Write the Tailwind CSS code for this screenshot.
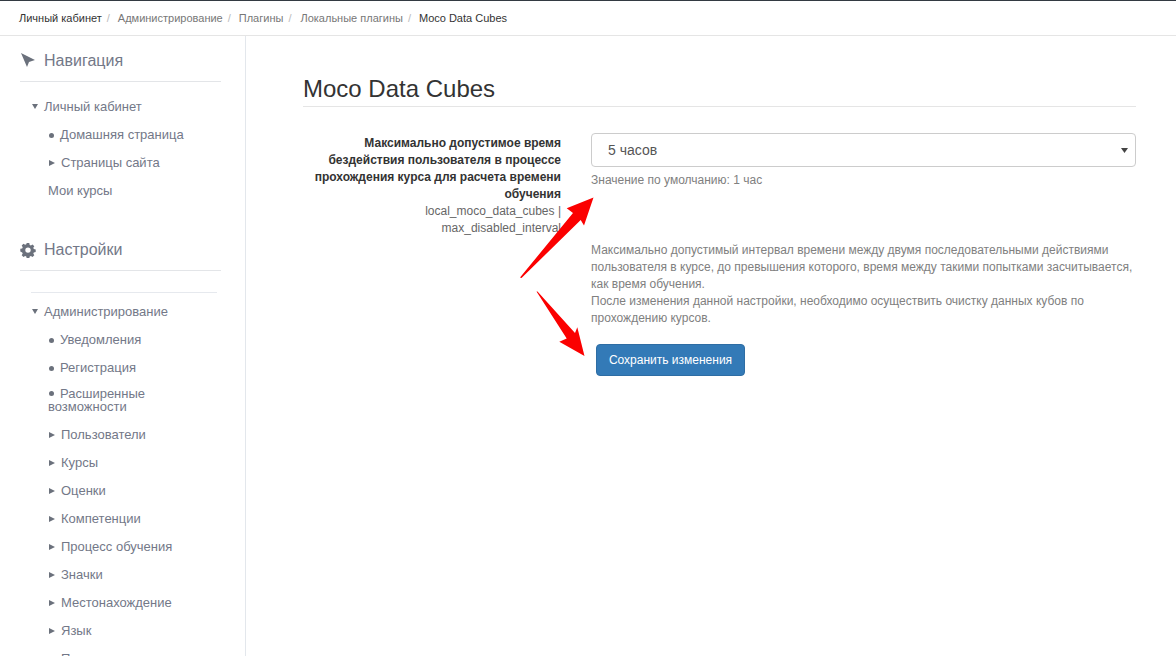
<!DOCTYPE html>
<html lang="ru">
<head>
<meta charset="utf-8">
<title>Moco Data Cubes</title>
<script src="https://cdn.jsdelivr.net/npm/@tailwindcss/browser@4"></script>
</head>
<body class="bg-white font-['Liberation_Sans',Arial,sans-serif] text-[#333]">
<div class="relative h-[656px] w-[1176px] overflow-hidden border-t border-t-[#333a42]">
  <nav class="flex h-[35px] items-center border-b border-[#e5e5e5] pl-[19px] text-[11px] text-[#777]">
    <span class="text-[#333]">Личный кабинет</span><span class="ml-[5px] mr-[8px] text-[#bbb]">/</span>
    <span>Администрирование</span><span class="ml-[5px] mr-[8px] text-[#bbb]">/</span>
    <span>Плагины</span><span class="ml-[5px] mr-[9px] text-[#bbb]">/</span>
    <span>Локальные плагины</span><span class="ml-[5px] mr-[8px] text-[#bbb]">/</span>
    <span class="text-[#333]">Moco Data Cubes</span>
  </nav>
  <div class="flex h-[620px]">
    <aside class="w-[246px] shrink-0 overflow-hidden border-r border-[#e3e7ec] pl-[20px] pr-[24px] text-[13px] text-[#737888]">
      <div class="flex h-[46px] items-center pt-[5px] text-[16px] text-[#737888] border-b border-[#e3e5e8]">
        <svg class="mr-[8px] h-[16px] w-[16px]" viewBox="0 0 16 16"><path d="M1 0 L15 7 L9 9 L7 14 Z" fill="#6b717c"/></svg>
        <span>Навигация</span>
      </div>
      <ul class="pt-[11px]">
        <li class="flex h-[28px] items-center pl-[12px]"><svg class="mb-[2px] mr-[6px] h-[5px] w-[6px]" viewBox="0 0 6 5"><path d="M0 0H6L3 5Z" fill="#6b717c"/></svg>Личный кабинет</li>
        <li class="flex h-[28px] items-center pl-[29px]"><span class="mr-[6px] h-[5px] w-[5px] rounded-full bg-[#6b717c]"></span>Домашняя страница</li>
        <li class="flex h-[28px] items-center pl-[29px]"><svg class="mb-[1px] mr-[6px] h-[6px] w-[6px]" viewBox="0 0 6 6"><path d="M0 0L6 3L0 6Z" fill="#6b717c"/></svg>Страницы сайта</li>
        <li class="flex h-[28px] items-center pl-[28px]">Мои курсы</li>
      </ul>
      <div class="mt-[20px] flex h-[46px] items-center pt-[5px] text-[16px] text-[#737888] border-b border-[#e3e5e8]">
        <svg class="mr-[8px] h-[16px] w-[16px]" viewBox="0 0 16 16"><path fill="#6b717c" fill-rule="evenodd" d="M6.7 1h2.6l.4 1.9 1.2.5 1.6-1 1.8 1.8-1 1.6.5 1.2 1.9.4v2.6l-1.9.4-.5 1.2 1 1.6-1.8 1.8-1.6-1-1.2.5-.4 1.9H6.7l-.4-1.9-1.2-.5-1.6 1-1.8-1.8 1-1.6-.5-1.2L.3 9.4V6.8l1.9-.4.5-1.2-1-1.6 1.8-1.8 1.6 1 1.2-.5ZM8 5.4a2.7 2.7 0 1 0 0 5.4 2.7 2.7 0 0 0 0-5.4Z"/></svg>
        <span>Настройки</span>
      </div>
      <div class="ml-[11px] mr-[4px] mt-[21px] border-t border-[#e6e9ee]"></div>
      <ul class="pt-[5px]">
        <li class="flex h-[28px] items-center pl-[12px]"><svg class="mb-[2px] mr-[6px] h-[5px] w-[6px]" viewBox="0 0 6 5"><path d="M0 0H6L3 5Z" fill="#6b717c"/></svg>Администрирование</li>
        <li class="flex h-[28px] items-center pl-[29px]"><span class="mr-[6px] h-[5px] w-[5px] rounded-full bg-[#6b717c]"></span>Уведомления</li>
        <li class="flex h-[28px] items-center pl-[29px]"><span class="mr-[6px] h-[5px] w-[5px] rounded-full bg-[#6b717c]"></span>Регистрация</li>
        <li class="h-[39px] pl-[28px] pt-[5px] leading-[13px]"><span class="mb-[2px] ml-[1px] mr-[6px] inline-block h-[5px] w-[5px] rounded-full bg-[#6b717c]"></span>Расширенные<br>возможности</li>
        <li class="flex h-[28px] items-center pl-[29px]"><svg class="mb-[1px] mr-[6px] h-[6px] w-[6px]" viewBox="0 0 6 6"><path d="M0 0L6 3L0 6Z" fill="#6b717c"/></svg>Пользователи</li>
        <li class="flex h-[28px] items-center pl-[29px]"><svg class="mb-[1px] mr-[6px] h-[6px] w-[6px]" viewBox="0 0 6 6"><path d="M0 0L6 3L0 6Z" fill="#6b717c"/></svg>Курсы</li>
        <li class="flex h-[28px] items-center pl-[29px]"><svg class="mb-[1px] mr-[6px] h-[6px] w-[6px]" viewBox="0 0 6 6"><path d="M0 0L6 3L0 6Z" fill="#6b717c"/></svg>Оценки</li>
        <li class="flex h-[28px] items-center pl-[29px]"><svg class="mb-[1px] mr-[6px] h-[6px] w-[6px]" viewBox="0 0 6 6"><path d="M0 0L6 3L0 6Z" fill="#6b717c"/></svg>Компетенции</li>
        <li class="flex h-[28px] items-center pl-[29px]"><svg class="mb-[1px] mr-[6px] h-[6px] w-[6px]" viewBox="0 0 6 6"><path d="M0 0L6 3L0 6Z" fill="#6b717c"/></svg>Процесс обучения</li>
        <li class="flex h-[28px] items-center pl-[29px]"><svg class="mb-[1px] mr-[6px] h-[6px] w-[6px]" viewBox="0 0 6 6"><path d="M0 0L6 3L0 6Z" fill="#6b717c"/></svg>Значки</li>
        <li class="flex h-[28px] items-center pl-[29px]"><svg class="mb-[1px] mr-[6px] h-[6px] w-[6px]" viewBox="0 0 6 6"><path d="M0 0L6 3L0 6Z" fill="#6b717c"/></svg>Местонахождение</li>
        <li class="flex h-[28px] items-center pl-[29px]"><svg class="mb-[1px] mr-[6px] h-[6px] w-[6px]" viewBox="0 0 6 6"><path d="M0 0L6 3L0 6Z" fill="#6b717c"/></svg>Язык</li>
        <li class="flex h-[28px] items-center pl-[29px]"><svg class="mb-[1px] mr-[6px] h-[6px] w-[6px]" viewBox="0 0 6 6"><path d="M0 0L6 3L0 6Z" fill="#6b717c"/></svg>Плагины</li>
      </ul>
    </aside>
    <main class="w-[890px] pl-[57px] pt-[36px]">
      <h2 class="h-[35px] border-b border-[#e5e5e5] text-[24px] leading-[34px] text-[#333]">Moco Data Cubes</h2>
      <div class="flex pt-[26px]">
        <div class="w-[258px] pt-[2px] text-right text-[12px] leading-[17px] text-[#666]">
          <div class="font-bold text-[#333]">Максимально допустимое время бездействия пользователя в процессе прохождения курса для расчета времени обучения</div>
          <div>local_moco_data_cubes |</div>
          <div>max_disabled_interval</div>
        </div>
        <div class="ml-[30px] w-[545px]">
          <div class="flex h-[34px] items-center justify-between rounded-[4px] border border-[#ccc] pl-[16px] pr-[7px] text-[14px] text-[#555]">
            <span>5 часов</span>
            <svg class="h-[5px] w-[7px]" viewBox="0 0 7 5"><path d="M0 0H7L3.5 5Z" fill="#444"/></svg>
          </div>
          <p class="mt-[5px] text-[12px] leading-[17px] text-[#808080]">Значение по умолчанию: 1 час</p>
          <p class="mt-[53px] w-[545px] text-[12px] leading-[17px] text-[#808080]">Максимально допустимый интервал времени между двумя последовательными действиями пользователя в курсе, до превышения которого, время между такими попытками засчитывается, как время обучения.<br>После изменения данной настройки, необходимо осуществить очистку данных кубов по прохождению курсов.</p>
          <button class="ml-[5px] mt-[17px] h-[32px] w-[149px] rounded-[4px] border border-[#2e6da4] bg-[#337ab7] text-[12px] text-white">Сохранить изменения</button>
        </div>
      </div>
    </main>
  </div>
  <svg class="pointer-events-none absolute left-0 top-[-1px]" width="1176" height="656" viewBox="0 0 1176 656">
    <path d="M520 277.5 L573 213 L566.7 208.3 L593.5 197.5 L584 225.5 L580.7 220 L521.5 278 Z" fill="#fb0000"/>
    <path d="M536.5 291.5 L537.5 291.5 L575 333 L577.3 327.3 L584.5 356 L559.3 341.7 L566.7 338.5 Z" fill="#fb0000"/>
  </svg>
</div>
</body>
</html>
